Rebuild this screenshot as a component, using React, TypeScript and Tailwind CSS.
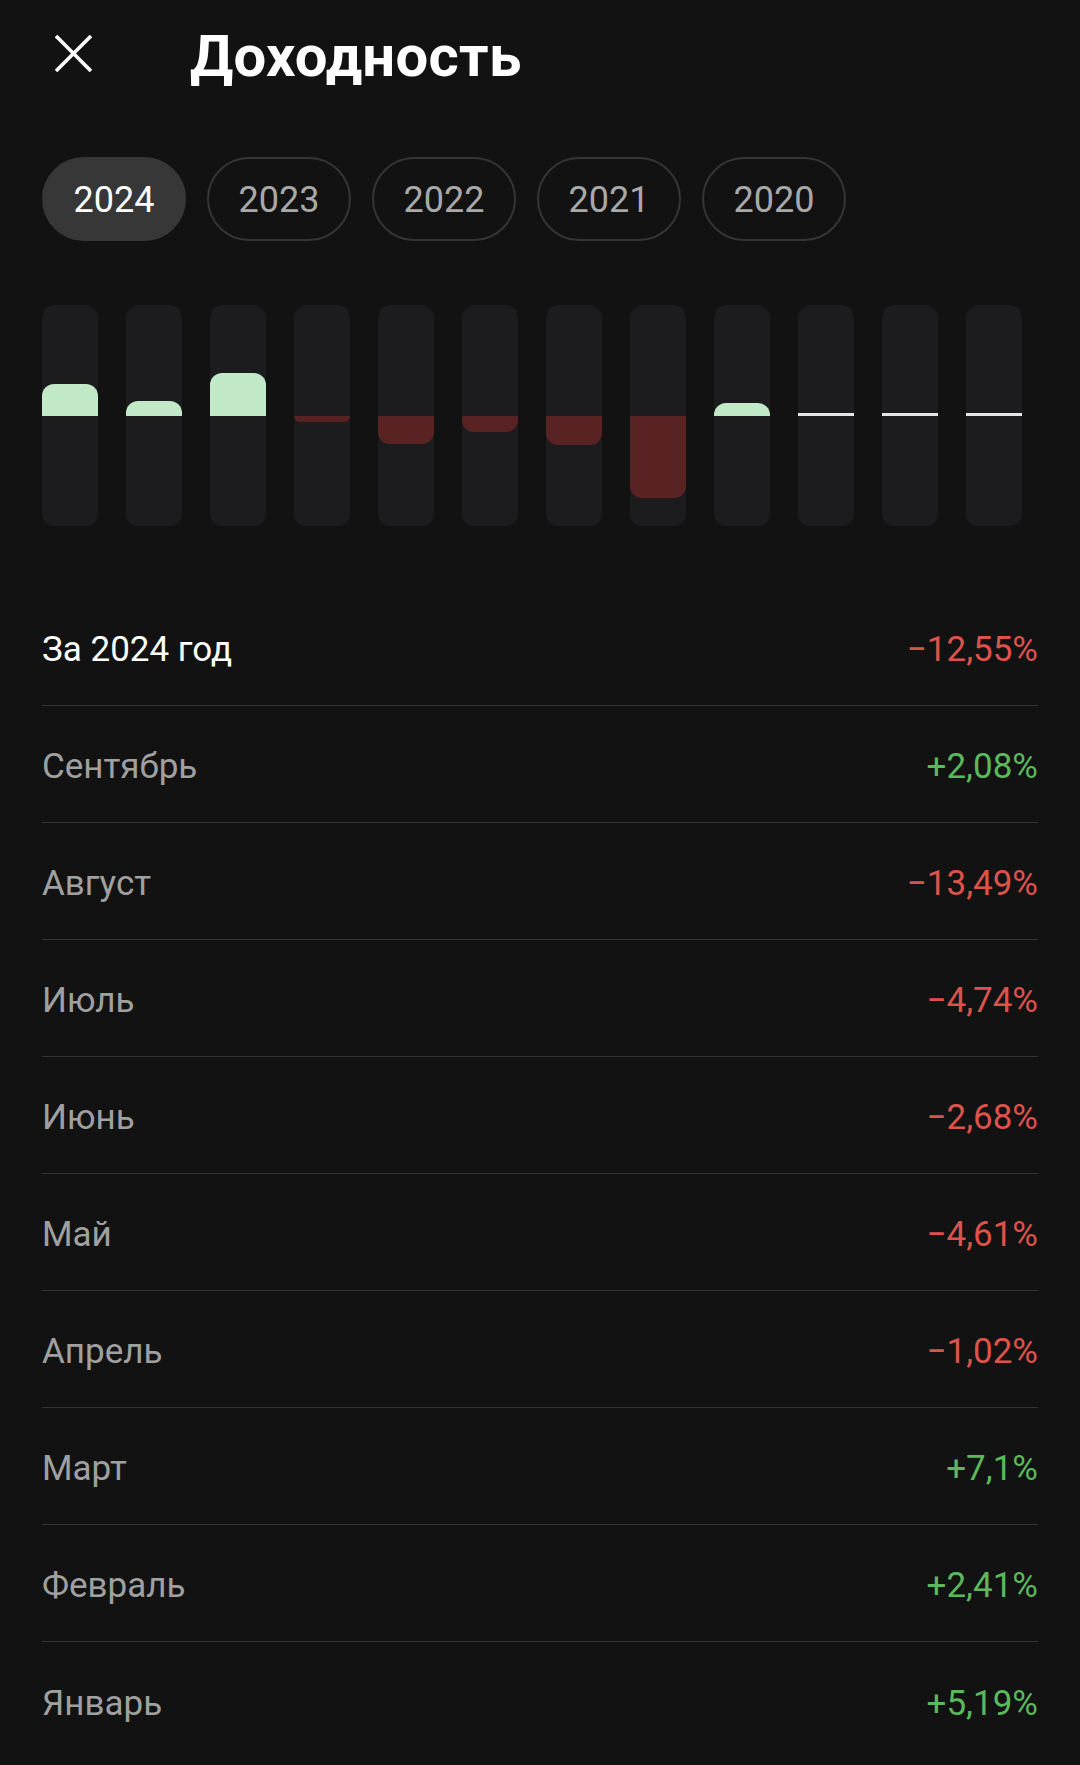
import React from "react";

const years = ["2024", "2023", "2022", "2021", "2020"];

const bars: (number | null)[] = [5.19, 2.41, 7.1, -1.02, -4.61, -2.68, -4.74, -13.49, 2.08, null, null, null];

const rows: { label: string; value: string; positive: boolean; main?: boolean }[] = [
  { label: "За 2024 год", value: "\u221212,55%", positive: false, main: true },
  { label: "Сентябрь", value: "+2,08%", positive: true },
  { label: "Август", value: "\u221213,49%", positive: false },
  { label: "Июль", value: "\u22124,74%", positive: false },
  { label: "Июнь", value: "\u22122,68%", positive: false },
  { label: "Май", value: "\u22124,61%", positive: false },
  { label: "Апрель", value: "\u22121,02%", positive: false },
  { label: "Март", value: "+7,1%", positive: true },
  { label: "Февраль", value: "+2,41%", positive: true },
  { label: "Январь", value: "+5,19%", positive: true },
];

const PX_PER_PCT = 6.08;

function Bar({ v }: { v: number | null }) {
  return (
    <div className="flex h-[221px] w-[56px] flex-col overflow-hidden rounded-[12px] bg-[#1c1c1e]">
      <div className="flex h-[111px] flex-col justify-end">
        {v === null ? (
          <div className="h-[3px] w-full bg-[#e6e6e6]" />
        ) : v > 0 ? (
          <div
            className="w-full rounded-t-[12px] bg-[#c1e8c7]"
            style={{ height: `${Math.round(v * PX_PER_PCT)}px` }}
          />
        ) : null}
      </div>
      <div className="flex flex-1 flex-col justify-start">
        {v !== null && v < 0 ? (
          <div
            className="w-full rounded-b-[12px] bg-[#5a2323]"
            style={{ height: `${Math.round(-v * PX_PER_PCT)}px` }}
          />
        ) : null}
      </div>
    </div>
  );
}

export default function App() {
  return (
    <div
      className="h-[1765px] w-[1080px] overflow-hidden bg-[#121212] text-white"
      style={{ fontFamily: "Roboto, 'Noto Sans', sans-serif" }}
    >
      {/* Header */}
      <div className="flex h-[108px] items-center pl-[55px]">
        <svg width="37" height="37" viewBox="0 0 37 37" className="-mt-[2px] shrink-0">
          <line x1="1" y1="1" x2="36" y2="36" stroke="#ffffff" strokeWidth="3.6" />
          <line x1="36" y1="1" x2="1" y2="36" stroke="#ffffff" strokeWidth="3.6" />
        </svg>
        <h1 className="ml-[98px] mt-[4px] text-[58px] font-bold leading-none tracking-[0.3px] text-white">
          Доходность
        </h1>
      </div>

      {/* Year pills */}
      <div className="mt-[49px] flex gap-[21px] pl-[42px]">
        {years.map((y, i) => (
          <div
            key={y}
            className={
              i === 0
                ? "flex h-[84px] w-[144px] items-center justify-center rounded-full border-2 border-[#373737] bg-[#373737] pt-[2px] text-[36px] text-white"
                : "flex h-[84px] w-[144px] items-center justify-center rounded-full border-2 border-[#353535] pt-[2px] text-[36px] text-[#a9a9a9]"
            }
          >
            {y}
          </div>
        ))}
      </div>

      {/* Chart */}
      <div className="mt-[64px] flex gap-[28px] pl-[42px]">
        {bars.map((v, i) => (
          <Bar key={i} v={v} />
        ))}
      </div>

      {/* List */}
      <div className="mt-[63px] px-[42px]">
        {rows.map((r, i) => (
          <div
            key={r.label}
            className={
              i < rows.length - 1
                ? "flex h-[117px] items-center justify-between border-b border-[#333333] pt-[7px]"
                : "flex h-[117px] items-center justify-between pt-[7px]"
            }
          >
            <span className={r.main ? "text-[35px] text-white" : "text-[35px] text-[#a0a0a0]"}>{r.label}</span>
            <span className={r.positive ? "text-[35px] text-[#5cb85c]" : "text-[35px] text-[#dd524b]"}>
              {r.value}
            </span>
          </div>
        ))}
      </div>
    </div>
  );
}
